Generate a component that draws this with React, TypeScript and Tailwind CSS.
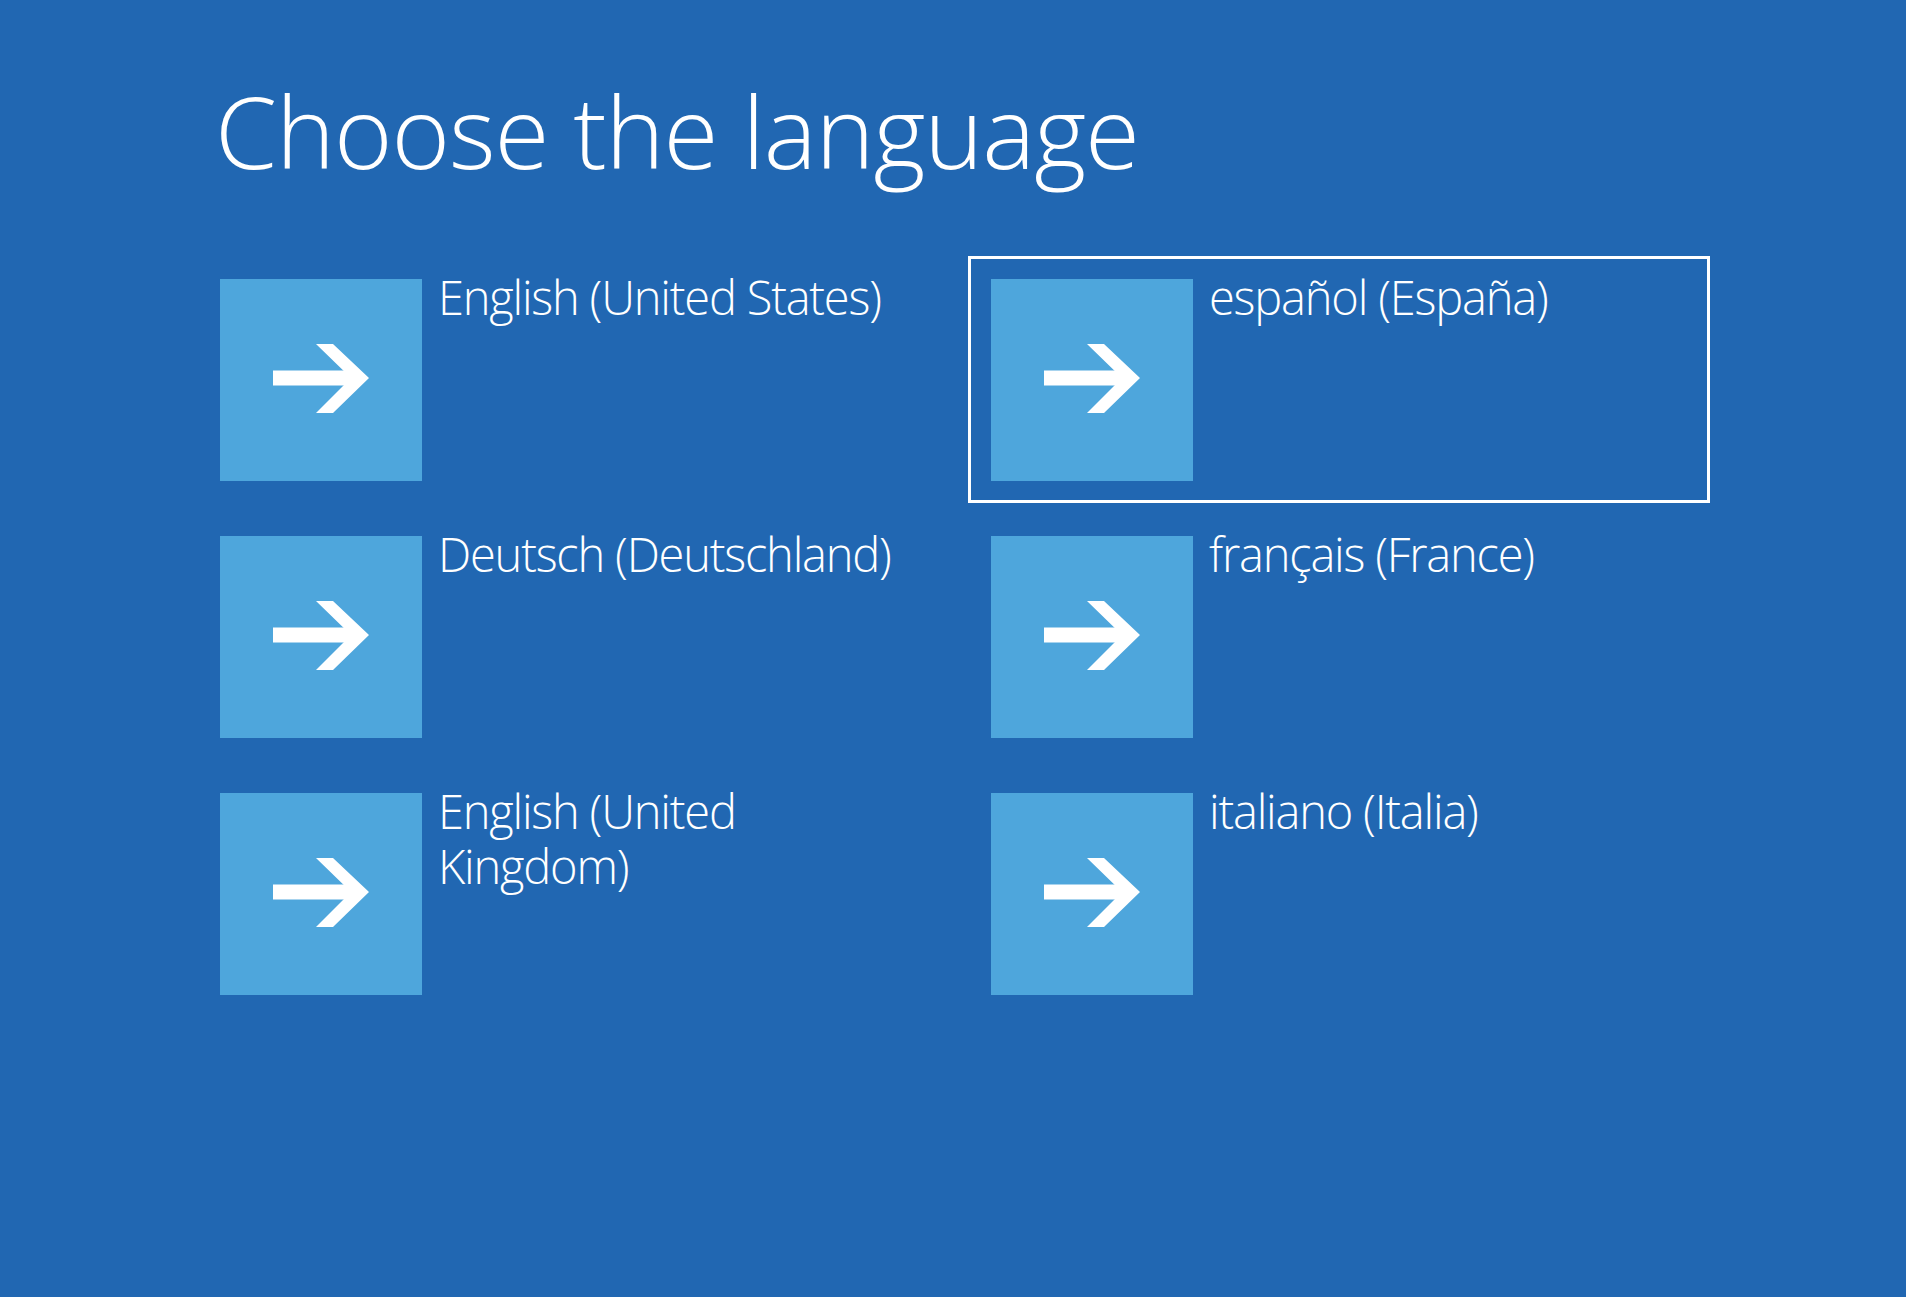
import React from "react";

const items = [
  { label: "English (United States)", selected: false },
  { label: "español (España)", selected: true },
  { label: "Deutsch (Deutschland)", selected: false },
  { label: "français (France)", selected: false },
  { label: "English (United Kingdom)", selected: false },
  { label: "italiano (Italia)", selected: false },
];

function Arrow() {
  return (
    <svg width="202" height="202" viewBox="0 0 202 202" className="block">
      <rect x="53" y="91.5" width="84" height="15" fill="#ffffff" />
      <polygon points="96,65 113,65 149,99 113,134 96,134 131,99" fill="#ffffff" />
    </svg>
  );
}

export default function App() {
  return (
    <div
      className="min-h-[1297px] w-full bg-[#2167b2] pl-[197px] pt-[80px] text-white"
      style={{ fontFamily: '"Open Sans", "Noto Sans", sans-serif' }}
    >
      <h1 className="ml-[18px] text-[100px] font-light leading-none tracking-[-1.1px]">
        Choose the language
      </h1>
      <div className="mt-[76px] grid grid-cols-[742px_742px] gap-x-[29px] gap-y-[10px]">
        {items.map((it) => (
          <div
            key={it.label}
            className={
              "flex h-[247px] gap-[16px] border-[3px] p-[20px] " +
              (it.selected ? "border-white" : "border-transparent")
            }
          >
            <div className="h-[202px] w-[202px] shrink-0 bg-[#4ea6dc]">
              <Arrow />
            </div>
            <div className="-mt-[9px] min-w-0 flex-1 text-[47px] font-light leading-[55px] tracking-[-1.2px]">
              {it.label}
            </div>
          </div>
        ))}
      </div>
    </div>
  );
}
